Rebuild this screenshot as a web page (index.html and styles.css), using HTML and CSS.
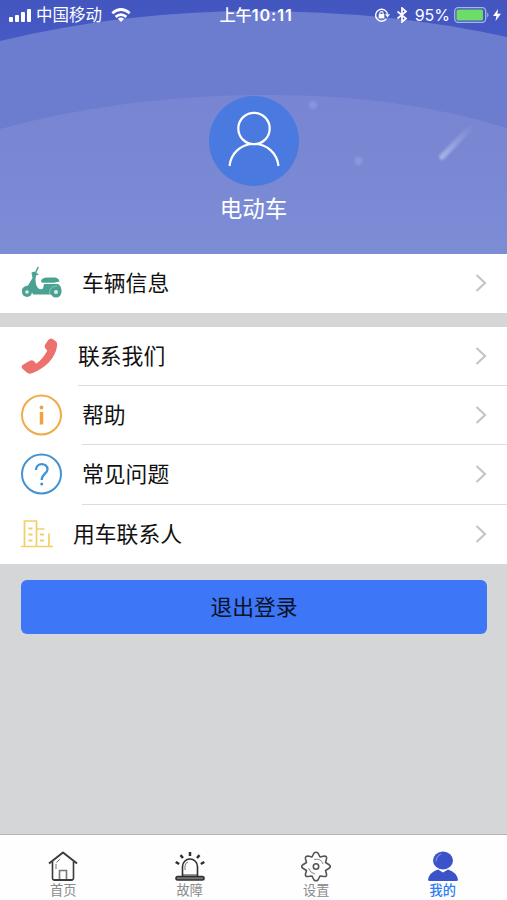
FILE: index.html
```html
<!DOCTYPE html>
<html lang="zh-CN">
<head>
<meta charset="utf-8">
<title>我的</title>
<link rel="stylesheet" href="styles.css">
</head>
<body>
<div class="app">
  <header class="hero">
    <svg class="hero-bg" viewBox="0 0 507 254" preserveAspectRatio="none" aria-hidden="true">
      <defs>
        <linearGradient id="sky" x1="0" y1="0" x2="0" y2="1"><stop offset="0" stop-color="#4355be"/><stop offset="1" stop-color="#485bc9"/></linearGradient>
        <linearGradient id="inner" x1="0" y1="0" x2="0" y2="1"><stop offset="0" stop-color="#7885d2"/><stop offset="1" stop-color="#7c8cd5"/></linearGradient>
        <linearGradient id="trail" x1="441" y1="157" x2="473" y2="125" gradientUnits="userSpaceOnUse"><stop offset="0" stop-color="#a5b3e6"/><stop offset="1" stop-color="#a5b3e6" stop-opacity="0"/></linearGradient>
        <filter id="soft" x="-50%" y="-50%" width="200%" height="200%"><feGaussianBlur stdDeviation="1"/></filter>
      </defs>
      <rect width="507" height="60" fill="url(#sky)"/>
      <path d="M0 41Q125 11 254 11Q390 11 507 37V254H0Z" fill="#6c7dcf"/>
      <path d="M0 129Q125 95 270 95Q400 95 507 128V254H0Z" fill="url(#inner)"/>
      <circle cx="313" cy="105" r="4" fill="#8795dc" filter="url(#soft)"/>
      <circle cx="358.500" cy="161" r="4" fill="#8898de" filter="url(#soft)"/>
      <path d="M442 157L473 125" stroke="url(#trail)" stroke-width="5.500" stroke-linecap="round" filter="url(#soft)"/>
    </svg>
    <div class="status">
      <div class="status-left">
        <svg width="24" height="16" viewBox="0 0 24 16" fill="#fff"><rect x="1" y="10" width="4" height="5" rx="1"/><rect x="7" y="8" width="4" height="7" rx="1"/><rect x="13" y="5" width="4" height="10" rx="1"/><rect x="19" y="2" width="4" height="13" rx="1"/></svg>
        <span class="carrier">中国移动</span>
        <svg class="wifi" width="20" height="15" viewBox="0 0 20 15" fill="none" stroke="#fff" stroke-width="2.700"><path d="M1.300 5.300Q10-2.300 18.700 5.300"/><path d="M4.600 8.900Q10 4.300 15.400 8.900"/><path d="M6.900 10.800Q10 8.300 13.100 10.800L10 14Z" fill="#fff" stroke="none"/></svg>
      </div>
      <div class="time">上午<span class="digits">10:11</span></div>
      <div class="status-right">
        <svg width="16" height="16" viewBox="0 0 16 16" fill="none" stroke="#fff" stroke-width="1.400"><path d="M12.300 12A6 6 0 1 1 13.500 7"/><path d="M11 7.200H16L13.500 10.400Z" fill="#fff" stroke="none"/><rect x="4.700" y="7" width="5.600" height="4.300" fill="#fff" stroke="none"/><path d="M5.900 7.500V6.200a1.600 1.600 0 0 1 3.200 0V7.500" stroke-width="1.100"/></svg>
        <svg class="bluetooth" width="12" height="16" viewBox="0 0 12 16" fill="none" stroke="#fff" stroke-width="1.700"><path d="M1.500 4.500L10 11.500L6 15V1L10 4.500L1.500 11.500"/></svg>
        <span class="percent">95%</span>
        <svg width="36" height="16" viewBox="0 0 36 16"><rect x=".700" y=".700" width="31" height="14.600" rx="3.500" fill="none" stroke="#a9b4e7" stroke-width="1.300"/><rect x="2.500" y="2.500" width="26.500" height="11" rx="1.500" fill="#6edc68"/><path d="M33.200 5.500Q36 8 33.200 10.500Z" fill="#a9b4e7"/></svg>
        <svg class="bolt" width="8" height="12" viewBox="0 0 8 12"><path d="M5 0L0 7H3.400L2.500 12L8 4.800H4.500Z" fill="#fff"/></svg>
      </div>
    </div>
    <div class="profile">
      <div class="avatar">
        <svg width="90" height="90" viewBox="0 0 90 90" fill="none" stroke="#fff" stroke-width="2.200"><circle cx="45" cy="32.500" r="15.700"/><path d="M20.500 70C22 57 32 48 45 48S68 57 69.500 70"/></svg>
      </div>
      <div class="name">电动车</div>
    </div>
  </header>

  <main class="content">
    <section class="group">
      <a class="row">
        <svg class="icon" width="41" height="34" viewBox="0 0 41 34"><path d="M14.500 7L17 1.500" stroke="#4aa292" stroke-width="1.500" stroke-linecap="round"/><g fill="#4aa292"><path d="M10.500 6.500L13.500 5.500L18 8.500L15 9.500L14.500 13Q14.500 20 17.500 22.500Q20 24 22 22.500L23 18H37Q40.500 20 40.500 25L37 28.500H12Q11 25 8 24.500L1 25Q.500 20.500 7 19.500L11.500 12Z"/><path d="M20 15Q21 11.500 26 11.500H34Q38 12 38.500 15.500L33 16.800H22Q20 17 20 15Z"/><circle cx="6" cy="26" r="5"/><circle cx="35" cy="26" r="5.500"/></g><circle cx="6" cy="26" r="1.800" fill="#d8eee9"/><circle cx="35" cy="26" r="2" fill="#d8eee9"/><path d="M28.500 28Q28 20 36 20" fill="none" stroke="#a5d1c7" stroke-width=".700"/></svg>
        <span class="label">车辆信息</span>
        <svg class="chevron" width="12" height="20" viewBox="0 0 12 20"><path d="M1.500 2L10 10L1.500 18"/></svg>
      </a>
    </section>

    <section class="group">
      <a class="row">
        <svg class="icon" width="37" height="40" viewBox="0 0 38 40"><path d="M28 3.500Q30.500 1 32.500 2.500L36 5Q37.500 6.500 37 10Q34 28 12 37.500Q8 39 6 37L1.500 33Q-.500 31 2 29L9 25Q12 23.500 14 26L15.500 28Q22 23.500 27 14.500L25 12Q23.500 10.500 25 8Z" fill="#ec706b"/></svg>
        <span class="label">联系我们</span>
        <svg class="chevron" width="12" height="20" viewBox="0 0 12 20"><path d="M1.500 2L10 10L1.500 18"/></svg>
      </a>
      <a class="row">
        <svg class="icon" width="41" height="42" viewBox="0 0 41 42"><circle cx="20.500" cy="21" r="19.500" fill="none" stroke="#f1aa45" stroke-width="2"/><path d="M20.500 18V30.500" stroke="#eca43f" stroke-width="3.500"/><circle cx="20.500" cy="13.500" r="1.900" fill="#eca43f"/></svg>
        <span class="label">帮助</span>
        <svg class="chevron" width="12" height="20" viewBox="0 0 12 20"><path d="M1.500 2L10 10L1.500 18"/></svg>
      </a>
      <a class="row">
        <svg class="icon" width="41" height="42" viewBox="0 0 41 42" fill="none" stroke="#4393d3"><circle cx="20.500" cy="21" r="19.500" stroke-width="2"/><path d="M15 17C15 9 26.500 9.500 26.500 16.200C26.500 21 20.700 20.500 20.700 27" stroke-width="2.300"/><circle cx="20.700" cy="31" r="1.500" fill="#4393d3" stroke="none"/></svg>
        <span class="label">常见问题</span>
        <svg class="chevron" width="12" height="20" viewBox="0 0 12 20"><path d="M1.500 2L10 10L1.500 18"/></svg>
      </a>
      <a class="row">
        <svg class="icon" width="32" height="28" viewBox="0 0 32 28" fill="none" stroke="#f1cf69" stroke-width="1.700"><path d="M0 26.500H32M3.500 26V1H15.500V26M15.500 9H23.500M28 13.500V26"/><path d="M7.500 8.500H11.500M7.500 14.500H11.500M7.500 20.500H11.500M19 14.500H23M19 20.500H23" stroke-width="2"/></svg>
        <span class="label">用车联系人</span>
        <svg class="chevron" width="12" height="20" viewBox="0 0 12 20"><path d="M1.500 2L10 10L1.500 18"/></svg>
      </a>
    </section>
    <button class="logout">退出登录</button>
  </main>

  <nav class="tabs">
    <a class="tab">
      <svg width="30" height="31" viewBox="0 0 30 31" fill="none" stroke="#3b3b3b" stroke-width="1.600" stroke-linejoin="round"><path d="M1 12.500L15 1.500L29 12.500" stroke-width="2"/><path d="M4.500 10.500V27Q4.500 29 6.500 29H23.500Q25.500 29 25.500 27V10.500"/><path d="M5.500 29H24.500" stroke-width="2"/><path d="M11.500 28V19.500H18.500V28" stroke="#777"/><path d="M8 18V12L13 7" stroke="#777" stroke-width="1" stroke-dasharray="5 1.500"/></svg>
      <span>首页</span>
    </a>
    <a class="tab">
      <svg width="30" height="31" viewBox="0 0 30 31" fill="none" stroke="#2f2f2f" stroke-width="1.600"><rect x="1" y="25.500" width="28" height="3.500" rx="1.700" fill="#777"/><path d="M7.500 25V15.500a7.500 7.500 0 0 1 15 0V25"/><path d="M7.500 24H22.500" stroke-width="1"/><path d="M10 19V15Q10 12 13 11" stroke="#777" stroke-width="1"/><path d="M15 1V5M5.500 4.200L8 7M24.500 4.200L22 7M.700 11L4.200 13M29.300 11L25.800 13" stroke-width="2.500"/></svg>
      <span>故障</span>
    </a>
    <a class="tab">
      <svg width="30" height="31" viewBox="0 0 30 31" fill="none" stroke="#555" stroke-width="1.600" stroke-linejoin="round"><path d="M13 2Q15 .500 17 2L19 6L23.500 5Q26 5 25.500 8L24.500 11.500L28.500 14Q30 15.500 28.500 17L24.500 19.500L25.500 23Q26 26 23 25.500L19 25L17 29Q15 30.500 13 29L11 25L7 25.500Q4 26 4.500 23L5.500 19.500L1.500 17Q0 15.500 1.500 14L5.500 11.500L4.500 8Q4 5 7 5L11 6Z"/><circle cx="15" cy="15.500" r="2.700"/><path d="M13 8.500Q20 7 22 13M7.500 17Q9 22 14 23" stroke="#888" stroke-width="1"/></svg>
      <span>设置</span>
    </a>
    <a class="tab active">
      <svg width="30" height="31" viewBox="0 0 30 31"><ellipse cx="15" cy="9.500" rx="10" ry="9" fill="#3b52c8"/><path d="M0 29Q1 21.500 10 18.500L15 21.500L20 18.500Q29 21.500 30 29Q30 30 28 30H2Q0 30 0 29Z" fill="#3b52c8"/><path d="M8 10Q8.500 5 13 3" fill="none" stroke="#8190df" stroke-width="1.200" stroke-linecap="round"/></svg>
      <span>我的</span>
    </a>
  </nav>
</div>
</body>
</html>
```

FILE: styles.css
```css
* {
  box-sizing: border-box;
}

body {
  margin: 0;
  font-family: Inter, "Noto Sans CJK SC", sans-serif;
  color: #111;
}

.app {
  display: flex;
  flex-direction: column;
  height: 900px;
  overflow: hidden;
  background: #d4d6d8;
}

.hero {
  position: relative;
  height: 254px;
  flex: none;
  color: #fff;
}

.hero-bg {
  position: absolute;
  inset: 0;
  width: 100%;
  height: 100%;
}

.status {
  position: relative;
  display: grid;
  grid-template-columns: 1fr auto 1fr;
  align-items: center;
  height: 30px;
  padding: 0 6px 0 8px;
  font-size: 16px;
  line-height: 30px;
}

.status svg {
  display: block;
  flex: none;
}

.status-left,
.status-right {
  display: flex;
  align-items: center;
}

.status-right {
  justify-content: flex-end;
}

.carrier {
  margin-left: 4px;
  font-size: 16.5px;
}

.wifi {
  margin-left: 9px;
}

.time {
  padding-left: 3px;
  font-weight: 500;
  font-size: 16.2px;
}

.digits {
  font-weight: 600;
  letter-spacing: 0.9px;
}

.bluetooth {
  margin: 0 7px 0 6px;
}

.percent {
  margin-right: 4px;
}

.bolt {
  margin-left: 3px;
}

.profile {
  position: relative;
  display: flex;
  flex-direction: column;
  align-items: center;
  padding-top: 66px;
}

.avatar {
  width: 90px;
  height: 90px;
  border-radius: 50%;
  background: #4a7ae0;
}

.avatar svg {
  display: block;
}

.name {
  margin-top: 7px;
  font-size: 22.5px;
  line-height: 32px;
}

.content {
  flex: 1;
  display: flex;
  flex-direction: column;
}

.group {
  background: #fff;
}

.group + .group {
  margin-top: 13.5px;
}

.row {
  display: flex;
  align-items: center;
  height: 59.3px;
  padding: 0 20px 1.5px 21px;
}

.icon {
  flex: none;
  margin-right: 20px;
}

.label {
  flex: 1;
  font-size: 21.8px;
  line-height: 58px;
}

.chevron {
  flex: none;
  fill: none;
  stroke: #c5c5c7;
  stroke-width: 2.2;
}

.row:not(:last-child) {
  background: linear-gradient(#dcdcde, #dcdcde) right bottom / calc(100% - 82px) 1px no-repeat;
}

.group .row:first-child:not(:last-child) {
  background-size: calc(100% - 78px) 1px;
}

.logout {
  height: 54px;
  margin: 16px 20px 0 21px;
  padding: 0 0 2px;
  border: 0;
  border-radius: 6px;
  background: #3d76f6;
  color: #0b1226;
  font: inherit;
  font-size: 21.8px;
}

.tabs {
  display: grid;
  grid-template-columns: repeat(4, 1fr);
  height: 66px;
  padding-right: 1px;
  border-top: 1px solid #b4b5b6;
  background: #fefefe;
}

.tab {
  display: flex;
  flex-direction: column;
  align-items: center;
  padding-top: 16px;
  font-size: 13.2px;
  line-height: 16px;
  color: #8a8a8a;
}

.tab svg {
  display: block;
}

.tab.active {
  color: #2f7cf0;
  font-weight: 500;
}
```
